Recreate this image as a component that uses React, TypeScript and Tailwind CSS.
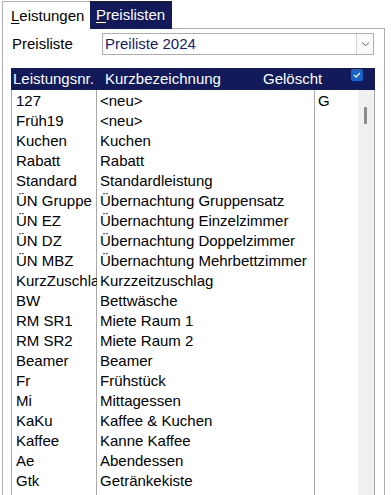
import React from "react";

const rows: [string, string, string][] = [
  ["127", "<neu>", "G"],
  ["Früh19", "<neu>", ""],
  ["Kuchen", "Kuchen", ""],
  ["Rabatt", "Rabatt", ""],
  ["Standard", "Standardleistung", ""],
  ["ÜN Gruppe", "Übernachtung Gruppensatz", ""],
  ["ÜN EZ", "Übernachtung Einzelzimmer", ""],
  ["ÜN DZ", "Übernachtung Doppelzimmer", ""],
  ["ÜN MBZ", "Übernachtung Mehrbettzimmer", ""],
  ["KurzZuschlag", "Kurzzeitzuschlag", ""],
  ["BW", "Bettwäsche", ""],
  ["RM SR1", "Miete Raum 1", ""],
  ["RM SR2", "Miete Raum 2", ""],
  ["Beamer", "Beamer", ""],
  ["Fr", "Frühstück", ""],
  ["Mi", "Mittagessen", ""],
  ["KaKu", "Kaffee & Kuchen", ""],
  ["Kaffee", "Kanne Kaffee", ""],
  ["Ae", "Abendessen", ""],
  ["Gtk", "Getränkekiste", ""],
];

export default function App() {
  return (
    <div
      className="w-[391px] h-[495px] overflow-hidden bg-white text-[15px] text-black"
      style={{ fontFamily: '"Liberation Sans", Arial, sans-serif' }}
    >
      {/* tabs */}
      <div className="ml-[2px] w-[383px] h-[29px] flex items-end">
        <div className="w-[88px] h-[28px] border-l border-t border-[#adadad] bg-white pl-[8px] leading-[27px] whitespace-nowrap">
          <span className="underline underline-offset-[2px]">L</span>eistungen
        </div>
        <div className="w-[82px] h-[28px] bg-[#121a5a] text-white pl-[6px] leading-[27px] whitespace-nowrap">
          <span className="underline underline-offset-[2px]">P</span>reislisten
        </div>
        <div className="flex-1 h-[29px] border-b border-[#adadad]" />
      </div>

      {/* panel */}
      <div className="ml-[2px] w-[383px] h-[470px] border-l border-r border-[#adadad] pt-[4px]">
        <div className="flex items-center h-[22px]">
          <div className="w-[99px] pl-[9px] whitespace-nowrap">Preisliste</div>
          <div className="w-[272px] h-[22px] border border-[#adadad] flex items-stretch bg-white">
            <div className="flex-1 pl-[2px] leading-[20px] text-[#14206b] whitespace-nowrap">
              Preiliste 2024
            </div>
            <div className="w-[17px] border-l border-[#d4d4d4] bg-[#fafafa] flex items-center justify-center">
              <svg width="9" height="6" viewBox="0 0 9 6">
                <path d="M1 1.5 L4.5 4.5 L8 1.5" fill="none" stroke="#6b6b6b" strokeWidth="1" />
              </svg>
            </div>
          </div>
        </div>

        {/* grid */}
        <div className="ml-[8px] mt-[13px] w-[364px]">
          <div className="h-[22px] bg-[#121a5a] text-white flex items-center leading-[22px] whitespace-nowrap">
            <div className="w-[94px] pl-[2px]">Leistungsnr.</div>
            <div className="w-[158px]">Kurzbezeichnung</div>
            <div className="w-[88px]">Gelöscht</div>
            <div className="w-[12px] h-[12px] -mt-[9px] rounded-[2px] bg-[#1763c6] flex items-center justify-center">
              <svg width="8" height="6" viewBox="0 0 8 6">
                <path d="M1 3 L3 5 L7 1" fill="none" stroke="white" strokeWidth="1.2" />
              </svg>
            </div>
          </div>
          <div className="h-[420px] flex border-l border-r border-[#a8a8a8]">
            <div className="flex relative">
              <div className="absolute inset-0 flex pointer-events-none">
                <div className="w-[84px] border-r border-[#a8a8a8] box-content" />
                <div className="w-[217px] border-r border-[#a8a8a8] box-content" />
              </div>
              <div className="pt-[1px] relative">
                {rows.map((r, i) => (
                  <div key={i} className="flex h-[20px] leading-[20px] whitespace-nowrap">
                    <div className="w-[85px] pl-[4px] overflow-hidden">{r[0]}</div>
                    <div className="w-[218px] pl-[3px] overflow-hidden">{r[1]}</div>
                    <div className="w-[43px] pl-[3px] overflow-hidden">{r[2]}</div>
                  </div>
                ))}
              </div>
            </div>
            <div className="w-[16px] bg-[#f0f0f0] pt-[17px] pl-[6px]">
              <div className="w-[3px] h-[17px] rounded-[1px] bg-[#8a8a8a]" />
            </div>
          </div>
        </div>
      </div>
    </div>
  );
}
